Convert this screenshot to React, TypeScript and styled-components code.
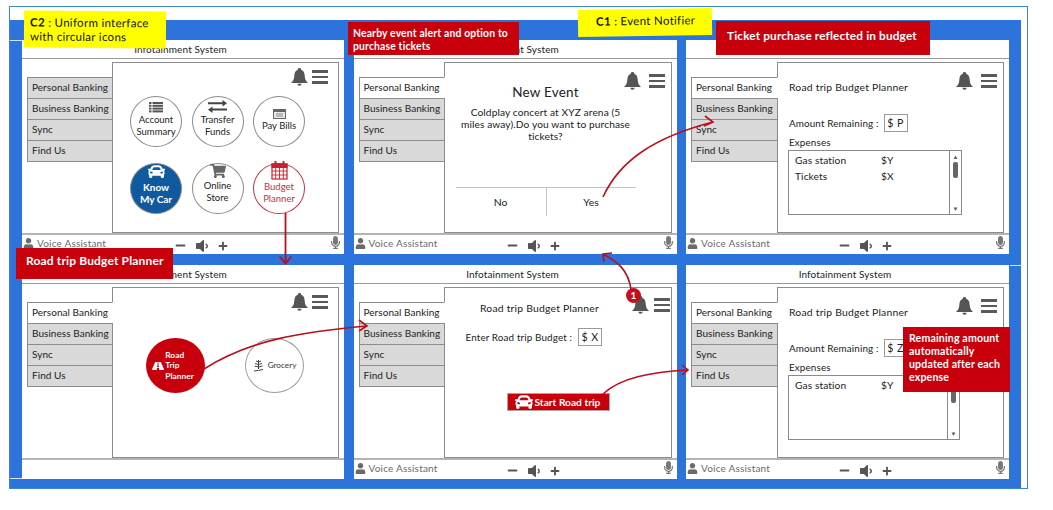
import React from "react";
import styled, { createGlobalStyle } from "styled-components";
import { FaCar, FaUser, FaMicrophone, FaVolumeDown, FaMinus, FaPlus, FaShoppingCart, FaRoad } from "react-icons/fa";

const Global = createGlobalStyle`
  html, body { margin: 0; padding: 0; background: #fff; }
  body { font-family: "Lato", "Open Sans", sans-serif; color: #222; }
  * { box-sizing: border-box; }
`;

const RED = "#c8000c";
const BLUE = "#2c74dc";
const LINE = "#8c8c8c";

const Page = styled.div`
  position: relative;
  width: 1053px;
  height: 510px;
  overflow: hidden;
  padding: 6px 0 0 9px;
`;
const Outline = styled.div`
  width: 1019px;
  height: 483px;
  border: 1px solid #3d87c8;
  padding-top: 13px;
`;
const Board = styled.div`
  width: 1011px;
  height: 468px;
  background: ${BLUE};
  padding: 20px 0 0 12px;
`;
const Grid = styled.div`
  display: grid;
  grid-template-columns: 322px 323px 323px;
  grid-template-rows: 214px 214px;
  column-gap: 9.5px;
  row-gap: 11px;
`;
const Panel = styled.section`
  display: flex;
  flex-direction: column;
  background: #fff;
`;
const TitleBar = styled.header`
  height: 19px;
  flex: none;
  padding-right: 5px;
  border-bottom: 1px solid #9a9a9a;
  text-align: center;
  font-size: 10px;
  line-height: 18px;
  letter-spacing: 0.12px;
`;
const Body = styled.div`
  display: flex;
  align-items: flex-start;
  height: 176px;
  flex: none;
  padding: 3px 5px 0;
  border-bottom: 2px solid #b4b4b4;
`;
const Menu = styled.nav<{ $wide?: boolean }>`
  width: ${(p) => (p.$wide ? 87 : 86)}px;
  flex: none;
  margin: 15px -1px 0 0;
  position: relative;
  z-index: 1;
  display: flex;
  flex-direction: column;
`;
const MenuItem = styled.div<{ $active?: boolean }>`
  height: 22px;
  margin-top: -1px;
  padding: 0 0 0 4px;
  border: 1px solid ${LINE};
  border-right: ${(p) => (p.$active ? "1px solid #fff" : `1px solid ${LINE}`)};
  background: ${(p) => (p.$active ? "#fff" : "#d9d9d9")};
  font-size: 10px;
  line-height: 18px;
  letter-spacing: 0.05px;
  white-space: nowrap;
  &:first-child { margin-top: 0; }
`;
const Frame = styled.div`
  position: relative;
  flex: 1;
  height: 171px;
  border: 1px solid ${LINE};
  background: #fff;
`;
const Tools = styled.div<{ $top: number; $right: number; $gap: number }>`
  position: absolute;
  top: ${(p) => p.$top}px;
  right: ${(p) => p.$right}px;
  display: flex;
  align-items: center;
  gap: ${(p) => p.$gap}px;
`;
const Burger = styled.div`
  width: 16px;
  height: 14px;
  display: flex;
  flex-direction: column;
  justify-content: space-between;
  & > i { display: block; height: 2.6px; background: #5a5a5a; }
`;
const IconGrid = styled.div`
  display: grid;
  grid-template-columns: repeat(3, 52px);
  grid-auto-rows: 51px;
  column-gap: 9.5px;
  row-gap: 16px;
  margin: 33px 0 0 17px;
`;
const Circle = styled.div<{ $tone?: "plain" | "blue" | "red" }>`
  border-radius: 50%;
  display: flex;
  flex-direction: column;
  align-items: center;
  justify-content: center;
  text-align: center;
  font-size: ${(p) => (p.$tone === "blue" ? "10px" : "9.5px")};
  font-weight: ${(p) => (p.$tone === "blue" ? 700 : 400)};
  line-height: 12px;
  border: 1px solid ${(p) => (p.$tone === "red" ? "#c8303c" : "#8a8a8a")};
  background: ${(p) => (p.$tone === "blue" ? "#0f5a9e" : "#fff")};
  color: ${(p) => (p.$tone === "blue" ? "#fff" : p.$tone === "red" ? "#c8303c" : "#222")};
`;
const CircleIcon = styled.span<{ $lift?: number; $color?: string }>`
  display: flex;
  margin-top: ${(p) => -(p.$lift ?? 0)}px;
  margin-bottom: 1px;
  color: ${(p) => p.$color ?? "inherit"};
`;
const RoadRow = styled.div`
  display: flex;
  gap: 40px;
  margin: 50px 0 0 33px;
`;
const BigCircle = styled.div<{ $filled?: boolean }>`
  width: 59px;
  height: 55px;
  border-radius: 50%;
  display: flex;
  align-items: center;
  justify-content: center;
  gap: ${(p) => (p.$filled ? 1 : 4)}px;
  padding-right: ${(p) => (p.$filled ? 5 : 0)}px;
  font-size: ${(p) => (p.$filled ? 8.4 : 8.2)}px;
  line-height: 10.5px;
  font-weight: ${(p) => (p.$filled ? 700 : 400)};
  background: ${(p) => (p.$filled ? RED : "#fff")};
  color: ${(p) => (p.$filled ? "#fff" : "#333")};
  border: ${(p) => (p.$filled ? "none" : "1px solid #9a9a9a")};
`;
const Dialog = styled.div`
  width: 180px;
  margin: 20px 0 0 11px;
  display: flex;
  flex-direction: column;
  align-items: center;
`;
const DialogTitle = styled.div`
  font-size: 13.5px;
  line-height: 18px;
  letter-spacing: 0.2px;
  margin-bottom: 5px;
`;
const DialogText = styled.div`
  font-size: 10.2px;
  line-height: 12px;
  text-align: center;
  white-space: nowrap;
  letter-spacing: 0.1px;
`;
const DialogButtons = styled.div`
  width: 100%;
  height: 29px;
  margin-top: 45px;
  border-top: 1px solid #c4c4c4;
  display: grid;
  grid-template-columns: 1fr 1fr;
  font-size: 10.4px;
`;
const DialogButton = styled.div`
  display: flex;
  align-items: center;
  justify-content: center;
  & + & { border-left: 1px solid #c4c4c4; }
`;
const PlannerHead = styled.div<{ $center?: boolean }>`
  font-size: 10.4px;
  line-height: 14px;
  letter-spacing: 0.2px;
  ${(p) => (p.$center ? "text-align:center;margin:13px 36px 0 0;" : "margin:17px 0 0 11px;")}
`;
const BudgetRow = styled.div`
  display: flex;
  align-items: center;
  gap: 6px;
  margin: 13px 0 0 21px;
  font-size: 9.9px;
  letter-spacing: 0.12px;
`;
const ValueBox = styled.span`
  display: inline-flex;
  align-items: center;
  justify-content: center;
  width: 24px;
  height: 18px;
  border: 1px solid #9a9a9a;
  font-size: 10.6px;
  letter-spacing: 0.5px;
  background: #fff;
`;
const StartButton = styled.div`
  display: flex;
  align-items: center;
  gap: 2px;
  width: 103px;
  height: 18px;
  margin: 47px 0 0 62px;
  padding-left: 7px;
  background: ${RED};
  color: #fff;
  font-weight: 700;
  font-size: 10.2px;
  border: 1px solid #b8a0a0;
`;
const RemainRow = styled.div`
  display: flex;
  align-items: center;
  gap: 5px;
  margin: 20px 0 0 11px;
  font-size: 9.9px;
  letter-spacing: 0.12px;
`;
const ExpensesLabel = styled.div`
  margin: 3px 0 0 11px;
  font-size: 9.9px;
  line-height: 14px;
  letter-spacing: 0.12px;
`;
const ExpenseList = styled.div<{ $wide: boolean }>`
  display: flex;
  width: ${(p) => (p.$wide ? 174 : 172)}px;
  height: 65px;
  margin: 1px 0 0 10px;
  border: 1px solid #8a8a8a;
`;
const ExpenseRows = styled.div`
  flex: 1;
  padding: 2px 0 0 6px;
`;
const ExpenseRow = styled.div`
  display: grid;
  grid-template-columns: 86px auto;
  font-size: 10.2px;
  line-height: 15.5px;
  letter-spacing: 0.1px;
`;
const Scrollbar = styled.div`
  width: 12px;
  flex: none;
  border-left: 1px solid #8a8a8a;
  display: flex;
  flex-direction: column;
  align-items: center;
  padding: 3px 0;
  font-size: 6px;
  line-height: 5px;
  color: #555;
  & > b {
    width: 5px;
    height: 16px;
    margin-top: 3px;
    border-radius: 2px;
    background: #666;
  }
  & > i { margin-top: auto; font-style: normal; }
`;
const Bar = styled.footer`
  flex: 1;
  display: flex;
  align-items: center;
  padding: 0 1px;
  color: #6a6a6a;
`;
const VoiceLabel = styled.div`
  display: flex;
  align-items: center;
  gap: 3px;
  width: 152px;
  font-size: 10px;
  letter-spacing: 0.2px;
  margin-top: -3px;
`;
const Controls = styled.div`
  display: flex;
  align-items: center;
  gap: 8px;
  color: #555;
  margin-top: 2px;
`;
const MicSlot = styled.div`
  margin: -4px 1px 0 auto;
  display: flex;
  color: #777;
`;
const Note = styled.div<{ $l: number; $t: number; $w: number; $h: number; $rot?: number; $size?: number }>`
  position: absolute;
  z-index: 5;
  left: ${(p) => p.$l}px;
  top: ${(p) => p.$t}px;
  width: ${(p) => p.$w}px;
  height: ${(p) => p.$h}px;
  transform: rotate(${(p) => p.$rot ?? 0}deg);
  font-size: ${(p) => p.$size ?? 11.5}px;
`;
const YellowNote = styled(Note)`
  background: #ffff00;
  color: #111;
  letter-spacing: 0.3px;
  line-height: 14px;
  padding: 5px 0 0 6px;
`;
const EventLabel = styled.span`
  margin-left: 12px;
`;
const RedNote = styled(Note)<{ $pad?: string; $lh?: number }>`
  background: ${RED};
  color: #fff;
  font-weight: 700;
  letter-spacing: 0.15px;
  line-height: ${(p) => p.$lh ?? 13}px;
  padding: ${(p) => p.$pad ?? "6px 0 0 6px"};
`;
const Badge = styled.div`
  position: absolute;
  z-index: 6;
  left: 626px;
  top: 288px;
  width: 15px;
  height: 15px;
  border-radius: 50%;
  background: #c40f1c;
  color: #fff;
  font-weight: 700;
  font-size: 10px;
  line-height: 15px;
  text-align: center;
`;
const Seam = styled.div<{ $l: number; $t: number; $w: number }>`
  position: absolute;
  left: ${(p) => p.$l}px;
  top: ${(p) => p.$t}px;
  width: ${(p) => p.$w}px;
  height: 1px;
  background: #d5e4f8;
`;
const ArrowLayer = styled.svg`
  position: absolute;
  left: 0;
  top: 0;
  z-index: 4;
  pointer-events: none;
`;

const Bell = () => (
  <svg width="17" height="18" viewBox="0 0 17 18" fill="#555">
    <path d="M8.5 0C9.5 0 10.2.7 10.2 1.7 12.8 2.6 13.6 5 13.7 8c.1 3 1.2 5 3.3 7H0c2.100-2 3.200-4 3.300-7 .1-3 .9-5.400 3.500-6.300C6.800.7 7.500 0 8.500 0z" />
    <path d="M6.400 15.700h4.200a2.100 2.100 0 0 1-4.200 0z" />
  </svg>
);
const ListIcon = () => (
  <svg width="14" height="11" viewBox="0 0 14 11" fill="#555">
    {[0, 2.8, 5.6, 8.4].map((y) => (
      <g key={y}>
        <rect x="0" y={y} width="2.500" height="2" />
        <rect x="3.500" y={y} width="10.500" height="2" />
      </g>
    ))}
  </svg>
);
const TransferIcon = () => (
  <svg width="19" height="13" viewBox="0 0 19 13" fill="#444">
    <path d="M0 2.300h14.500V0L19 3.300l-4.500 3.200V4.200H0z" />
    <path d="M19 8.600H4.500V6.400L0 9.700l4.500 3.300v-2.400H19z" />
  </svg>
);
const BillIcon = () => (
  <svg width="13" height="10" viewBox="0 0 13 10">
    <rect x=".5" y=".5" width="12" height="9" fill="#e8e8e8" stroke="#666" />
    <rect x="1" y="1" width="11" height="2" fill="#666" />
    <path d="M3 5h7M3 7h7" stroke="#888" />
  </svg>
);
const CalendarIcon = () => (
  <svg width="17" height="19" viewBox="0 0 17 19" fill="none" stroke="#c8202c">
    <rect x="1" y="3" width="15" height="15" fill="#fff" strokeWidth="1.200" />
    <rect x="1" y="3" width="15" height="3.500" fill="#c8202c" />
    <path d="M1 10h15M1 14h15M4.700 6.500V18M8.500 6.500V18M12.300 6.500V18" strokeWidth=".9" />
    <path d="M4.500 0v4M12.500 0v4" strokeWidth="2" />
  </svg>
);
const PlantIcon = () => (
  <svg width="11" height="13" viewBox="0 0 11 13" fill="none" stroke="#444" strokeWidth="1">
    <path d="M1 12c3-.5 6-.8 9-1.500M5.500 1v9M5.500 3 3 2M5.500 3 8 2M5.500 5.500 2 4.500M5.500 5.500 9 4.500M5.500 8 1.500 7M5.500 8 9.500 7" />
  </svg>
);

const MENU = ["Personal Banking", "Business Banking", "Sync", "Find Us"];

const SideMenu = ({ active, wide }: { active: boolean; wide?: boolean }) => (
  <Menu $wide={wide}>
    {MENU.map((m, i) => (
      <MenuItem key={m} $active={active && i === 0}>{m}</MenuItem>
    ))}
  </Menu>
);

const VoiceBar = () => (
  <Bar>
    <VoiceLabel>
      <FaUser size={11} />
      Voice Assistant
    </VoiceLabel>
    <Controls>
      <FaMinus size={11} />
      <FaVolumeDown size={16} />
      <FaPlus size={10} />
    </Controls>
    <MicSlot><FaMicrophone size={13} /></MicSlot>
  </Bar>
);

const Toolbar = ({ top, right, gap }: { top: number; right: number; gap: number }) => (
  <Tools $top={top} $right={right} $gap={gap}>
    <Bell />
    <Burger><i /><i /><i /></Burger>
  </Tools>
);

const Expenses = ({ amount, rows, wide }: { amount: string; rows: [string, string][]; wide: boolean }) => (
  <>
    <PlannerHead>Road trip Budget Planner</PlannerHead>
    <RemainRow>
      Amount Remaining : <ValueBox>{amount}</ValueBox>
    </RemainRow>
    <ExpensesLabel>Expenses</ExpensesLabel>
    <ExpenseList $wide={wide}>
      <ExpenseRows>
        {rows.map(([a, b]) => (
          <ExpenseRow key={a}><span>{a}</span><span>{b}</span></ExpenseRow>
        ))}
      </ExpenseRows>
      <Scrollbar>▲<b /><i>▼</i></Scrollbar>
    </ExpenseList>
  </>
);

export default function App() {
  return (
    <Page>
      <Global />
      <Outline>
        <Board>
          <Grid>
            <Panel>
              <TitleBar>Infotainment System</TitleBar>
              <Body>
                <SideMenu active={false} />
                <Frame>
                  <Toolbar top={5} right={10} gap={4} />
                  <IconGrid>
                    <Circle><CircleIcon $lift={4}><ListIcon /></CircleIcon>Account<br />Summary</Circle>
                    <Circle><CircleIcon $lift={6}><TransferIcon /></CircleIcon>Transfer<br />Funds</Circle>
                    <Circle><CircleIcon $lift={2}><BillIcon /></CircleIcon>Pay Bills</Circle>
                    <Circle $tone="blue"><CircleIcon $lift={10}><FaCar size={17} /></CircleIcon>Know<br />My Car</Circle>
                    <Circle><CircleIcon $lift={10} $color="#666"><FaShoppingCart size={16} /></CircleIcon>Online<br />Store</Circle>
                    <Circle $tone="red"><CircleIcon $lift={11}><CalendarIcon /></CircleIcon>Budget<br />Planner</Circle>
                  </IconGrid>
                </Frame>
              </Body>
              <VoiceBar />
            </Panel>

            <Panel>
              <TitleBar>Infotainment System</TitleBar>
              <Body>
                <SideMenu active />
                <Frame>
                  <Toolbar top={9} right={6} gap={8} />
                  <Dialog>
                    <DialogTitle>New Event</DialogTitle>
                    <DialogText>Coldplay concert at XYZ arena (5<br />miles away).Do you want to purchase<br />tickets?</DialogText>
                    <DialogButtons>
                      <DialogButton>No</DialogButton>
                      <DialogButton>Yes</DialogButton>
                    </DialogButtons>
                  </Dialog>
                </Frame>
              </Body>
              <VoiceBar />
            </Panel>

            <Panel>
              <TitleBar>Infotainment System</TitleBar>
              <Body>
                <SideMenu active wide />
                <Frame>
                  <Toolbar top={9} right={6} gap={8} />
                  <Expenses amount="$ P" wide rows={[["Gas station", "$Y"], ["Tickets", "$X"]]} />
                </Frame>
              </Body>
              <VoiceBar />
            </Panel>

            <Panel>
              <TitleBar>Infotainment System</TitleBar>
              <Body>
                <SideMenu active />
                <Frame>
                  <Toolbar top={5} right={10} gap={4} />
                  <RoadRow>
                    <BigCircle $filled>
                      <FaRoad size={12} />
                      <span>Road<br />Trip<br />Planner</span>
                    </BigCircle>
                    <BigCircle>
                      <PlantIcon />
                      <span>Grocery</span>
                    </BigCircle>
                  </RoadRow>
                </Frame>
              </Body>
              <Bar />
            </Panel>

            <Panel>
              <TitleBar>Infotainment System</TitleBar>
              <Body>
                <SideMenu active />
                <Frame>
                  <Toolbar top={8} right={1} gap={5} />
                  <PlannerHead $center>Road trip Budget Planner</PlannerHead>
                  <BudgetRow>
                    Enter Road trip Budget : <ValueBox>$ X</ValueBox>
                  </BudgetRow>
                  <StartButton><FaCar size={18} />Start Road trip</StartButton>
                </Frame>
              </Body>
              <VoiceBar />
            </Panel>

            <Panel>
              <TitleBar>Infotainment System</TitleBar>
              <Body>
                <SideMenu active wide />
                <Frame>
                  <Toolbar top={9} right={6} gap={8} />
                  <Expenses amount="$ Z" wide={false} rows={[["Gas station", "$Y"]]} />
                </Frame>
              </Body>
              <VoiceBar />
            </Panel>
          </Grid>
        </Board>
      </Outline>

      <Seam $l={10} $t={40} $w={12} />
      <Seam $l={10} $t={478} $w={12} />
      <Seam $l={1010} $t={265} $w={11} />

      <ArrowLayer width="1053" height="510" viewBox="0 0 1053 510" fill="none" stroke="#b8101f" strokeWidth="1.600">
        <path d="M285.500 213V263M279.500 256.500l6 7 6-7" strokeWidth="1.800" />
        <path d="M603 197C620 160 655 137 713 122M705 116l8 6-9 4" />
        <path d="M204 369C250 340 300 332 367 326M359 320l8 6-8 5" />
        <path d="M631 289C628 270 618 262 603 254M604 262l-1-8 9-1" />
        <path d="M603 394C620 378 650 372 688 370M682 365l6 5-6 5" />
      </ArrowLayer>

      <YellowNote $l={24} $t={11} $w={142} $h={37} $rot={0.4}>
        <b>C2</b> : Uniform interface<br />with circular icons
      </YellowNote>
      <YellowNote $l={578} $t={9} $w={134} $h={27} $rot={-0.8}>
        <EventLabel><b>C1</b> : Event Notifier</EventLabel>
      </YellowNote>
      <RedNote $l={348} $t={22} $w={171} $h={33} $size={10.4} $pad="5px 0 0 5px">
        Nearby event alert and option to<br />purchase tickets
      </RedNote>
      <RedNote $l={716} $t={21} $w={214} $h={34} $size={11.8} $pad="7px 0 0 11px" $lh={15}>
        Ticket purchase reflected in budget
      </RedNote>
      <RedNote $l={16} $t={248} $w={157} $h={31} $size={12} $pad="5px 0 0 10px" $lh={15}>
        Road trip Budget Planner
      </RedNote>
      <RedNote $l={903} $t={327} $w={107} $h={65} $size={10.6} $pad="5px 0 0 6px">
        Remaining amount<br />automatically<br />updated after each<br />expense
      </RedNote>
      <Badge>1</Badge>
    </Page>
  );
}
